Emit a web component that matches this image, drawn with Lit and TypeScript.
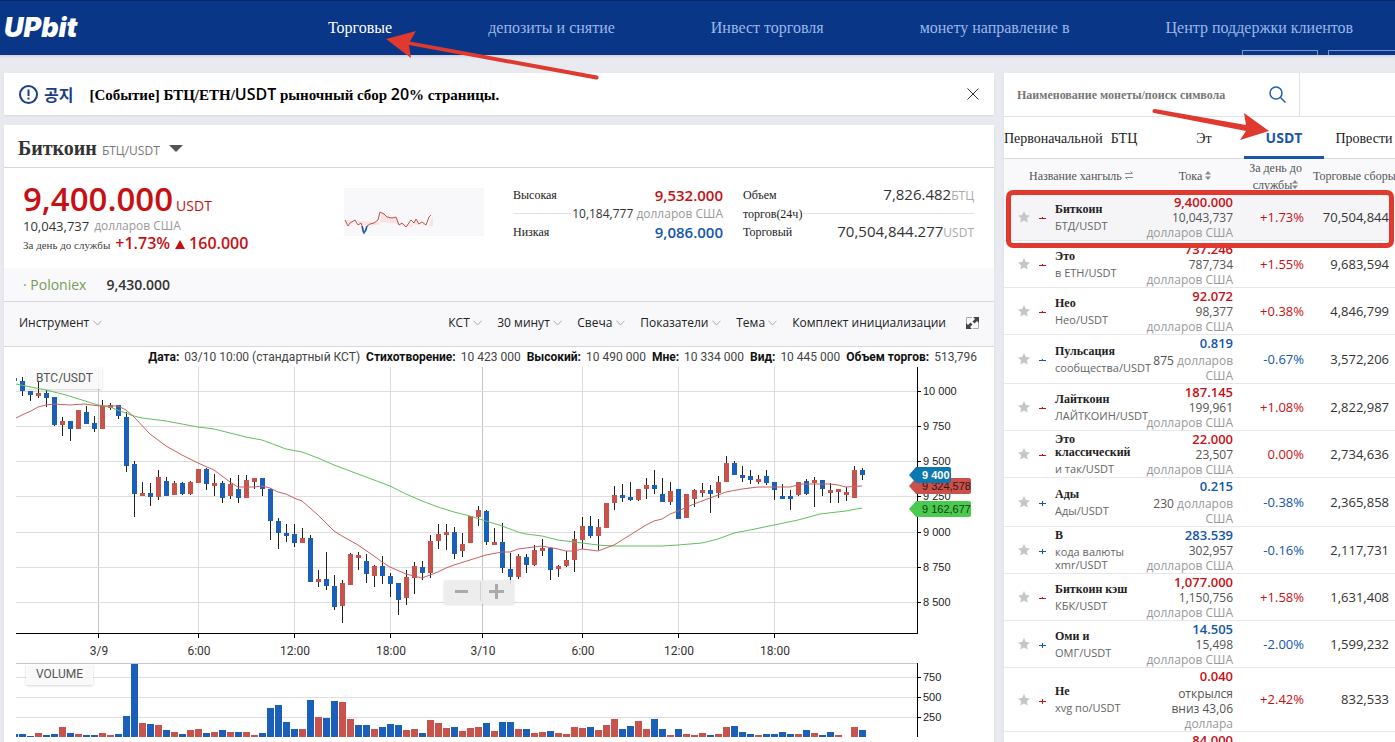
import { LitElement, html, svg, css, nothing } from "lit";
import { customElement, property } from "lit/decorators.js";

type Tone = "up" | "down";
type Coin = {
  name: string; code: string; tone: Tone; price: string;
  krw: string; unit: string; wrap?: boolean; change: string; volume: string; plus?: boolean;
};

const COINS: Coin[] = [
  { name: "Биткоин", code: "БТД/USDT", tone: "up", price: "9,400.000", krw: "10,043,737", unit: "долларов США", change: "+1.73%", volume: "70,504,844" },
  { name: "Это", code: "в ETH/USDT", tone: "up", price: "737.246", krw: "787,734", unit: "долларов США", change: "+1.55%", volume: "9,683,594" },
  { name: "Нео", code: "Нео/USDT", tone: "up", price: "92.072", krw: "98,377", unit: "долларов США", change: "+0.38%", volume: "4,846,799" },
  { name: "Пульсация", code: "сообщества/USDT", tone: "down", price: "0.819", krw: "875", unit: "долларов США", wrap: true, change: "-0.67%", volume: "3,572,206" },
  { name: "Лайткоин", code: "ЛАЙТКОИН/USDT", tone: "up", price: "187.145", krw: "199,961", unit: "долларов США", change: "+1.08%", volume: "2,822,987" },
  { name: "Это классический", code: "и так/USDT", tone: "up", price: "22.000", krw: "23,507", unit: "долларов США", change: "0.00%", volume: "2,734,636" },
  { name: "Ады", code: "Ады/USDT", tone: "down", price: "0.215", krw: "230", unit: "долларов США", wrap: true, change: "-0.38%", volume: "2,365,858", plus: true },
  { name: "В", code: "кода валюты xmr/USDT", tone: "down", price: "283.539", krw: "302,957", unit: "долларов США", change: "-0.16%", volume: "2,117,731", plus: true },
  { name: "Биткоин кэш", code: "КБК/USDT", tone: "up", price: "1,077.000", krw: "1,150,756", unit: "долларов США", change: "+1.58%", volume: "1,631,408" },
  { name: "Оми и", code: "ОМГ/USDT", tone: "down", price: "14.505", krw: "15,498", unit: "долларов США", change: "-2.00%", volume: "1,599,232", plus: true },
  { name: "Не", code: "xvg по/USDT", tone: "up", price: "0.040", krw: "открылся вниз 43,06", unit: "доллара", wrap: true, change: "+2.42%", volume: "832,533", plus: true },
  { name: "", code: "", tone: "up", price: "84.000", krw: "", unit: "", change: "", volume: "" },
];

// Each candle: [tone, high, body top, body bottom, low, volume bar height]
type Candle = [0 | 1, number, number, number, number, number];
const CANDLES: Candle[] = [
  [0,377,381,391,396,3],[0,391,391,395,401,1],[1,382,393,396,398,4],[0,390,393,398,407,2],[0,397,397,425,426,3],
  [1,417,421,425,436,10],[0,421,421,429,441,4],[1,410,410,429,429,3],[0,406,412,424,424,2],[0,416,423,429,432,2],
  [1,400,406,429,429,4],[1,403,405,408,410,2],[0,405,405,416,419,3],[0,412,417,466,472,21],[0,461,464,494,517,73],
  [1,482,493,496,496,14],[0,483,493,497,506,13],[1,470,477,497,500,12],[0,477,481,496,496,7],[1,481,483,495,495,5],
  [0,482,483,494,495,3],[1,481,482,494,495,7],[1,469,469,483,483,8],[0,468,469,484,490,4],[1,474,483,486,496,5],
  [0,481,483,498,503,7],[1,478,484,496,499,5],[0,475,489,498,503,5],[1,475,480,498,498,5],[1,478,478,482,489,2],
  [0,478,478,489,496,4],[0,488,489,521,540,29],[0,518,521,533,549,32],[0,524,533,536,542,15],[0,524,534,543,547,8],
  [1,528,538,543,543,8],[0,535,538,582,582,37],[1,570,579,582,587,20],[0,552,579,586,590,19],[0,575,586,607,610,36],
  [1,580,583,606,623,35],[1,553,554,585,585,18],[1,552,555,558,570,12],[0,554,561,574,583,12],[1,565,566,576,587,8],
  [0,556,566,576,584,10],[0,573,576,584,597,13],[0,583,583,600,615,12],[1,570,577,598,605,7],[1,562,566,578,594,8],
  [0,561,567,573,580,4],[1,535,541,573,578,17],[1,524,534,541,549,14],[1,524,532,535,550,9],[0,527,532,554,559,10],
  [1,533,544,551,557,6],[1,516,516,543,543,9],[1,506,510,517,526,10],[0,510,511,542,545,14],[1,528,542,545,545,6],
  [0,523,542,568,573,15],[0,553,569,577,584,15],[1,554,556,577,579,8],[0,554,557,565,573,8],[1,545,550,565,566,4],
  [1,539,548,551,556,5],[0,548,548,570,580,6],[1,565,566,569,577,4],[1,551,560,566,567,3],[1,531,539,560,572,10],
  [1,517,526,540,549,9],[0,516,526,536,538,10],[1,519,527,536,550,7],[1,503,503,528,528,12],[1,486,495,503,510,18],
  [0,484,495,498,502,8],[0,482,497,500,501,11],[1,489,489,500,501,16],[1,478,485,489,499,8],[0,470,485,489,494,18],
  [0,478,494,502,502,8],[1,482,491,502,505,2],[0,489,489,519,519,8],[1,494,494,518,518,3],[1,489,490,499,507,2],
  [1,483,490,493,497,4],[0,485,490,494,513,2],[1,476,482,493,498,3],[1,456,463,482,482,10],[0,461,463,475,475,11],
  [0,466,475,478,482,5],[0,470,476,480,484,3],[1,475,479,482,484,2],[0,470,476,483,485,3],[0,482,482,490,500,3],
  [0,484,496,499,499,5],[0,490,496,499,510,3],[1,482,482,495,496,3],[0,479,481,494,495,7],[1,477,480,483,507,4],
  [0,480,480,489,496,2],[1,483,490,493,503,5],[1,489,489,492,503,2],[1,487,492,495,501,0],[1,466,470,498,498,10],
  [0,468,470,475,480,7],
];
// Slots whose volume bar is blue although the candle closed up
const BLUE_VOLUME = new Set([42, 101]);

const FAST_AVERAGE = "16,418 22,415 31,411 38,407 46,405 54,404 70,405 84,404 100,406 118,406 126,410 134,417 150,434 166,446 182,455 198,463 214,470 230,482 238,487 254,487 262,486 270,488 278,492 286,494 294,498 302,501 318,515 334,531 342,536 358,545 374,556 382,562 390,567 406,574 422,578 430,575 438,572 446,568 454,565 470,560 486,555 502,552 510,552 518,549 542,546 558,549 566,551 574,551 582,549 598,551 606,548 614,545 630,535 646,525 654,521 662,519 670,514 678,511 694,504 710,498 726,492 742,489 758,487 790,487 802,484 830,484 838,485 846,487 862,486";
const SLOW_AVERAGE = "16,384 46,390 66,395 82,400 98,405 110,407 120,411 134,416 142,418 166,421 198,427 214,429 230,433 246,437 262,440 270,443 286,449 302,452 318,458 334,465 350,471 366,477 382,483 390,486 406,494 422,501 438,507 454,512 470,516 486,521 502,526 518,532 526,534 542,536 558,540 582,543 598,545 614,546 662,546 678,545 702,543 718,539 734,533 750,530 774,525 798,520 820,514 846,511 862,508";

const PRICES: [number, string][] = [[391,"10 000"],[426,"9 750"],[461,"9 500"],[496,"9 250"],[532,"9 000"],[567,"8 750"],[602,"8 500"]];
const VOLUMES: [number, string][] = [[677,"750"],[697,"500"],[717,"250"]];
const TIMES: [number, string][] = [[98,"3/9"],[198,"6:00"],[294,"12:00"],[390,"18:00"],[482,"3/10"],[582,"6:00"],[678,"12:00"],[774,"18:00"]];
const TAGS: { y: number; label: string; kind: string; right: number }[] = [
  { y: 486, label: "9 324,578", kind: "fast", right: 971 },
  { y: 475, label: "9 400", kind: "last", right: 951 },
  { y: 509, label: "9 162,677", kind: "slow", right: 971 },
];

@customElement("price-chart")
class PriceChart extends LitElement {
  static styles = css`
    :host { display: block; }
    .chart { display: block; width: 100%; height: auto; }
    .grid { stroke: #dedede; }
    .day { stroke: #c4c4c4; }
    .axis { stroke: #000; }
    .border { stroke: #c8c8c8; }
    .wick { stroke: #222; }
    .up { fill: #c8524c; }
    .down { fill: #1a5fba; }
    .line { fill: none; stroke-width: 1; }
    .line.fast { stroke: #c9615d; }
    .line.slow { stroke: #63bf62; }
    .price { font: 11px "Liberation Sans", Arial, sans-serif; fill: #222; }
    .tag-fast { fill: #c9504b; } .tag-last { fill: #0d78b0; } .tag-slow { fill: #4bca50; }
    .ink-fast { fill: #3a1513; } .ink-last { fill: #fff; font-weight: 700; } .ink-slow { fill: #123e14; }
    .time { font: 12px Roboto, sans-serif; fill: #333; text-anchor: middle; }
    .legend { font: 12px Roboto, sans-serif; fill: #555; }
    .plate { fill: #fff; fill-opacity: 0.85; filter: drop-shadow(0 1px 1px #0003); }
    .zoom { fill: #eee; fill-opacity: 0.88; filter: drop-shadow(0 1px 1px #0002); }
    .sign { fill: #aaa; }
  `;

  render() {
    const x = (i: number) => 22 + i * 8;
    return html`
      <svg class="chart" viewBox="4 367 990 375" role="img" aria-label="BTC/USDT">
        <g shape-rendering="crispEdges">
          ${TIMES.map(([t, label]) => svg`<path class=${label.includes("/") ? "day" : "grid"} d="M${t + 0.5} 367V633" />`)}
          ${PRICES.map(([y]) => svg`<path class="grid" d="M16 ${y + 0.5}H917" />`)}
          ${VOLUMES.map(([y]) => svg`<path class="grid" d="M16 ${y + 0.5}H917" />`)}
          <path class="border" d="M16 663.5H917" />
        </g>
        <rect class="plate" x="26" y="664" width="67" height="21" />
        <text class="legend" x="36" y="678">VOLUME</text>
        <rect class="plate" x="26" y="367" width="76" height="22" />
        <text class="legend" x="36" y="382">BTC/USDT</text>
        <g shape-rendering="crispEdges">
          <rect class="down" x="16" y="378" width="1" height="3" />
          <rect class="down" x="16" y="734" width="2" height="3" />
          ${CANDLES.map(([up, hi, top, bottom, lo, volume], i) => svg`
            <path class="wick" d="M${x(i) + 0.5} ${hi}V${lo}" />
            <rect class=${up ? "up" : "down"} x=${x(i) - 2} y=${top} width="5" height=${bottom - top} />
            <rect class=${up && !BLUE_VOLUME.has(i) ? "up" : "down"} x=${x(i) - 3} y=${737 - volume} width="7" height=${volume} />`)}
          <path class="axis" d="M16 633.5H917.5V367M917.5 663V737" fill="none" />
          ${TIMES.map(([t]) => svg`<path class="axis" d="M${t + 0.5} 634v4" />`)}
          ${[...PRICES, ...VOLUMES].map(([y]) => svg`<path class="axis" d="M918 ${y + 0.5}h3" />`)}
        </g>
        <polyline class="line slow" points=${SLOW_AVERAGE} />
        <polyline class="line fast" points=${FAST_AVERAGE} />
        ${[...PRICES, ...VOLUMES].map(([y, label]) => svg`<text class="price" x="923" y=${y + 4}>${label}</text>`)}
        ${TIMES.map(([t, label]) => svg`<text class="time" x=${t + 1} y="655">${label}</text>`)}
        ${TAGS.map(({ y, label, kind, right }) => svg`
          <path class="tag-${kind}" d="M909 ${y}L916 ${y - 8}H${right - 2}Q${right} ${y - 8} ${right} ${y - 6}V${y + 6}Q${right} ${y + 8} ${right - 2} ${y + 8}H916Z" />
          <text class="price ink-${kind}" x="922" y=${y + 4}>${label}</text>`)}
        <rect class="zoom" x="444" y="580" width="70" height="24" rx="1" />
        <rect class="sign" x="455" y="590" width="13" height="3" />
        <rect x="480" y="582" width="1" height="19" fill="#d4d4d4" />
        <path class="sign" d="M489 590h6v-6h3v6h6v3h-6v6h-3v-6h-6z" />
      </svg>`;
  }
}

@customElement("menu-select")
class MenuSelect extends LitElement {
  @property() label = "";
  static styles = css`
    :host { display: block; }
    .wrap { display: flex; align-items: center; gap: 3px; }
    .select {
      appearance: none; border: 0; padding: 0; margin: 0; background: none;
      font: 12px/18px "Open Sans", "Noto Sans", sans-serif; color: #222;
    }
    .chevron { display: block; width: 9px; height: 6px; fill: none; stroke: #aaa; }
  `;
  render() {
    return html`<label class="wrap">
      <select class="select" aria-label=${this.label}><option>${this.label}</option></select>
      <svg class="chevron" viewBox="0 0 9 6"><path d="M.5 .7 4.5 5 8.5 .7" /></svg>
    </label>`;
  }
}

const arrowDown = svg`<path d="M0 0h14L7 7z" />`;

@customElement("app-root")
class AppRoot extends LitElement {
  static styles = css`
    :host {
      --sans: "Open Sans", "Noto Sans", sans-serif;
      --serif: "Liberation Serif", "Times New Roman", serif;
      --red: #c80f14; --blue: #1357a8; --mark: #e0392f;
      display: flex; flex-direction: column; height: 100vh; overflow: hidden;
      background: #e9eaf0; color: #333;
      font: 12px/16px var(--sans);
    }
    * { box-sizing: border-box; }
    h1, h2, p, dl, dd, ul { margin: 0; padding: 0; }
    button { border: 0; padding: 0; margin: 0; background: none; font: inherit; color: inherit; }
    a { color: inherit; text-decoration: none; }
    svg { display: block; }
    .up { color: var(--red); }
    .down { color: var(--blue); }

    .header {
      position: relative; z-index: 1; flex: none; height: 55px; overflow: visible;
      display: flex; align-items: center;
      background: #093687; border-top: 1px solid #062765;
      box-shadow: 0 1px 3px #0002;
    }
    .logo { width: 328px; padding-left: 4px; font: italic 900 27px/30px Inter, sans-serif; color: #fff; }
    .nav { display: flex; gap: 96px; white-space: nowrap; font: 16px/20px var(--serif); color: #9db8e8; }
    .nav a { position: relative; }
    .nav .current { color: #fff; }
    .boxes { position: absolute; left: 1242px; right: 0; bottom: 0; height: 5px; overflow: hidden; display: flex; gap: 10px; }
    .box { flex: none; width: 76px; height: 20px; border: 1px solid #7898cf; }
    .arrow { position: absolute; overflow: visible; fill: var(--mark); stroke: none; pointer-events: none; z-index: 2; }
    .arrow-nav { left: 58px; top: 13px; width: 212px; height: 46px; }
    .arrow-tab { left: -93px; top: -11px; width: 120px; height: 40px; }

    .page {
      flex: 1; min-height: 0; display: grid; grid-template-columns: minmax(0, 1fr) 391px;
      gap: 10px; padding: 18px 0 0 4px;
    }
    .main { min-width: 0; display: flex; flex-direction: column; gap: 10px; }
    .card { background: #fff; box-shadow: 0 1px 2px #0001; }

    .notice { flex: none; height: 42px; padding: 0 15px; display: flex; align-items: center; }
    .notice-icon { width: 19px; height: 19px; margin-right: 6px; }
    .notice-tag { font: 700 16px/20px "Noto Sans CJK KR", sans-serif; color: #1a3f85; margin-right: 16px; }
    .notice-text { flex: 1; font: 700 15px/20px var(--serif); color: #000; }
    .sans { font: 600 16px/20px var(--sans); }
    .close { width: 12px; height: 12px; }

    .market { flex: 1; min-height: 0; }
    .title { height: 43px; padding: 4px 14px 0; display: flex; align-items: center; border-bottom: 1px solid #d8d8dc; }
    .name { font: 700 20px/24px var(--serif); margin-right: 5px; }
    .pair { font-size: 12px; line-height: 16px; color: #777; padding-top: 6px; }
    .more { margin-left: 9px; fill: #555; }

    .ticker { height: 100px; padding: 13px 20px 0 19px; display: flex; }
    .quote { width: 321px; }
    .last { display: flex; align-items: baseline; gap: 3px; height: 36px; font: 600 33px/36px var(--sans); }
    .last-unit { font: 14px/16px var(--sans); }
    .sub { height: 16px; font-size: 13px; line-height: 18px; display: flex; gap: 5px; }
    .sub .muted { font-size: 12px; }
    .muted { color: #999; }
    .delta { display: flex; align-items: baseline; gap: 5px; font-weight: 600; font-size: 16px; line-height: 20px; white-space: nowrap; }
    .delta-label { font: 11px/16px var(--serif); color: #444; }
    .triangle { display: inline-block; width: 10px; height: 9px; margin-right: 4px; fill: currentColor; }
    .spark { width: 140px; height: 48px; margin-top: 7px; background: #f8f8fb; }
    .stats { display: flex; flex: 1; gap: 20px; margin-left: 29px; padding-top: 5px; }
    .stat { width: 210px; }
    .stat-wide { flex: 1; }
    .line { display: flex; align-items: center; justify-content: space-between; height: 18px; }
    .line dt, .mid-label { font: 12px/18px var(--serif); color: #222; }
    .line dd { font-size: 15px; line-height: 18px; color: #333; }
    .line dd.bold { font-weight: 600; }
    .line dd.up { color: var(--red); }
    .line dd.down { color: var(--blue); }
    .unit { font-size: 12px; color: #aaa; }
    .mid { display: flex; align-items: center; gap: 1px; height: 19px; font-size: 12px; white-space: nowrap; }
    .rule { flex: 1; height: 1px; background: #e2e2e6; }

    .rival { height: 34px; padding: 0 19px; display: flex; align-items: center; gap: 20px; font-size: 14px; background: #f9f9fb; border-bottom: 1px solid #d8d8dc; }
    .rival-name { color: #7a9a55; }
    .rival-price { font-weight: 600; }
    .toolbar { height: 45px; padding: 0 15px 2px; display: flex; align-items: center; gap: 15px; background: #f8f8fa; border-bottom: 1px solid #d8d8dc; color: #222; white-space: nowrap; }
    .grow { flex: 1; }
    .expand { margin-left: 5px; }
    .ohlc { height: 20px; padding: 1px 17px 0; display: flex; justify-content: flex-end; align-items: center; gap: 6px; font: 12px/19px Roboto, sans-serif; color: #444; white-space: nowrap; }
    .ohlc b { color: #111; font-weight: 700; margin-right: 5px; }

    .side { min-width: 0; overflow: hidden; }
    .search { display: flex; align-items: center; height: 43px; width: 296px; padding: 0 13px; border-right: 1px solid #e2e2e6; }
    .search input { flex: 1; min-width: 0; border: 0; padding: 0; outline: 0; background: none; font: 700 12px/16px var(--serif); color: #666; }
    .search input::placeholder { color: #777; opacity: 1; }
    .search svg { fill: none; stroke: #1c61b5; stroke-width: 1.5; }
    .tabs { display: grid; grid-template-columns: repeat(5, 80px); height: 43px; border-top: 1px solid #e2e2e6; border-bottom: 1px solid #d8d8dc; font: 14px/20px var(--serif); color: #222; white-space: nowrap; }
    .tab { position: relative; display: block; padding: 12px 0 8px; text-align: center; height: 43px; }
    .tab.active { font: 700 14px/20px var(--sans); color: #1b56a6; border-bottom: 3px solid #1b56a6; padding: 11px 0 0; height: 42px; }

    .coins { width: 100%; table-layout: fixed; border-collapse: collapse; }
    .c-star { width: 30px; } .c-icon { width: 16px; } .c-name { width: 92px; } .c-price { width: 91px; } .c-change { width: 71px; }
    .coins th { height: 35px; padding: 0; background: #f9f9fb; font: 12px/17px var(--serif); color: #555; vertical-align: middle; text-align: center; }
    .coins th.h-name { text-align: left; padding-left: 25px; }
    .coins th.h-price { padding-left: 15px; }
    .coins th.h-last { text-align: left; padding-left: 9px; white-space: nowrap; }
    .coins th.h-change { padding-left: 14px; }
    .coins svg { display: inline-block; }
    .coins td { padding: 0; border-bottom: 1px solid #e8e8ec; vertical-align: middle; text-align: right; font-size: 13px; line-height: 15px; white-space: nowrap; }
    .coins td.star { padding-left: 14px; text-align: left; }
    .star button, .star svg { display: block; }
    .star svg { fill: #c6c6c9; }
    .coins td.candle { text-align: center; }
    .candle svg { fill: currentColor; vertical-align: middle; }
    .coins td.coin { text-align: left; padding-left: 5px; font-size: 11px; line-height: 13px; color: #666; }
    .coin-name { display: block; font: 700 12px/13px var(--serif); color: #222; margin-bottom: 3px; max-width: 80px; white-space: normal; }
    .coin-code { display: block; }
    .coin-code.two { white-space: normal; max-width: 80px; }
    .price { display: block; font-weight: 600; line-height: 16px; }
    .krw { display: block; font-size: 12px; white-space: normal; color: #555; }
    .krw .muted { display: block; white-space: nowrap; }
    .krw.wrap { margin-top: 2px; padding-left: 8px; }
    .krw.wrap .muted { display: inline; white-space: normal; }
    .coins td.vol { padding-right: 6px; color: #333; }
    .marked { position: relative; }
    .marked td { background: #f5f5f8; }
    .frame { position: absolute; z-index: 1; inset: -4px 1px -7px 2px; border: 5px solid var(--mark); border-radius: 7px; pointer-events: none; }
  `;

  private row(c: Coin, i: number) {
    return html`<tr class=${i === 0 ? "marked" : ""}>
      <td class="star">${c.name ? html`<button aria-label="${c.name}"><svg width="12" height="12" viewBox="0 0 12 12"><path d="M6 0l1.8 3.900 4.200.500-3.100 2.900.800 4.200L6 9.400l-3.700 2.100.800-4.200L0 4.400l4.200-.500z" /></svg></button>` : nothing}</td>
      <td class="candle ${c.tone}">${c.name ? html`<svg width="7" height="8" viewBox="0 0 7 8" shape-rendering="crispEdges"><path d=${c.plus ? "M0 4h3V2h1v2h3v1H4v2H3V5H0z" : "M0 4h3V3h1v1h3v1H0z"} /></svg>` : nothing}</td>
      <td class="coin"><span class="coin-name">${c.name}</span><span class="coin-code ${c.code.length > 16 ? "two" : ""}">${c.code}</span></td>
      <td><span class="price ${c.tone}">${c.price}</span><span class="krw ${c.wrap ? "wrap" : ""}">${c.krw} <span class="muted">${c.unit}</span></span></td>
      <td class=${c.tone}>${c.change}</td>
      <td class="vol">${c.volume}${i === 0 ? html`<span class="frame"></span>` : nothing}</td>
    </tr>`;
  }

  private sort() {
    return svg`<svg width="6" height="9" viewBox="0 0 6 9" fill="#888"><path d="M3 0l3 3.500H0zM3 9l3-3.500H0z" /></svg>`;
  }

  render() {
    const ohlc = [["Дата:", "03/10 10:00 (стандартный КСТ)"], ["Стихотворение:", "10 423 000"], ["Высокий:", "10 490 000"], ["Мне:", "10 334 000"], ["Вид:", "10 445 000"], ["Объем торгов:", "513,796"]];
    return html`
      <header class="header">
        <a class="logo" href="#">UPbit</a>
        <nav class="nav">
          <a class="current" href="#">Торговые
            <svg class="arrow arrow-nav" viewBox="0 0 212 46"><path d="M0 8 30 0l-6 10.500 187 34a2 2 0 0 1-1 4L23 14l2 13z" /></svg>
          </a>
          <a href="#">депозиты и снятие</a>
          <a href="#">Инвест торговля</a>
          <a href="#">монету направление в</a>
          <a href="#">Центр поддержки клиентов</a>
        </nav>
        <div class="boxes"><span class="box"></span><span class="box"></span></div>
      </header>
      <div class="page">
        <main class="main">
          <section class="card notice">
            <svg class="notice-icon" viewBox="0 0 19 19" fill="none" stroke="#1a3f85" stroke-width="2"><circle cx="9.500" cy="9.500" r="8.500" /><path d="M9.500 4.500v6.500M9.500 12.500v2" /></svg>
            <span class="notice-tag" lang="ko">공지</span>
            <p class="notice-text">[Событие] БТЦ/ETH/<span class="sans">USDT</span> рыночный сбор <span class="sans">20</span>% страницы.</p>
            <button class="close" aria-label="×"><svg width="12" height="12" viewBox="0 0 12 12" stroke="#333" fill="none"><path d="M.5 .5l11 11M11.500 .5l-11 11" /></svg></button>
          </section>
          <section class="card market">
            <div class="title">
              <h1 class="name">Биткоин</h1><span class="pair">БТЦ/USDT</span>
              <button class="more" aria-label="БТЦ/USDT"><svg width="14" height="7" viewBox="0 0 14 7">${arrowDown}</svg></button>
            </div>
            <div class="ticker">
              <div class="quote">
                <p class="last up">9,400.000<span class="last-unit">USDT</span></p>
                <p class="sub"><span>10,043,737</span><span class="muted">долларов США</span></p>
                <p class="delta up"><span class="delta-label">За день до службы</span><span>+1.73%</span><span><svg class="triangle" viewBox="0 0 10 9"><path d="M5 0l5 9H0z" /></svg>160.000</span></p>
              </div>
              <svg class="spark" viewBox="0 0 140 48">
                <path fill="#fbe3e3" d="M1 32l3 5 6-5 3 1 3 4 2-1v1h17l3-13 4 3 5 3 6-1 3 8 12 2 4-7 4 5 5-1 4 3 3-10h1v9z" />
                <path fill="none" stroke="#c8524c" d="M1 32l3 6 2-3 5-3 3 5 3-2 2 5 1 5 3-7 3-2 4-1 4-3 2-8 4 2 3 3 5 1 4-1 3 8 3-2 4 4 5-7 3 3 2-4 3 5 3-2 4 3 3-8 2-2" />
                <path fill="none" stroke="#1a5fba" stroke-width="1.500" d="M18 38l1 5 1 2 2-3 1-4" />
              </svg>
              <div class="stats">
                <dl class="stat">
                  <div class="line"><dt>Высокая</dt><dd class="bold up">9,532.000</dd></div>
                  <div class="mid"><span class="rule"></span><span>10,184,777 <span class="muted">долларов США</span></span></div>
                  <div class="line"><dt>Низкая</dt><dd class="bold down">9,086.000</dd></div>
                </dl>
                <dl class="stat-wide">
                  <div class="line"><dt>Объем</dt><dd>7,826.482<span class="unit">БТЦ</span></dd></div>
                  <div class="mid"><span class="mid-label">торгов(24ч)</span><span class="rule"></span></div>
                  <div class="line"><dt>Торговый</dt><dd>70,504,844.277<span class="unit">USDT</span></dd></div>
                </dl>
              </div>
            </div>
            <div class="rival"><span class="rival-name">· Poloniex</span><span class="rival-price">9,430.000</span></div>
            <div class="toolbar">
              <menu-select label="Инструмент"></menu-select><span class="grow"></span>
              <menu-select label="КСТ"></menu-select>
              <menu-select label="30 минут"></menu-select>
              <menu-select label="Свеча"></menu-select>
              <menu-select label="Показатели"></menu-select>
              <menu-select label="Тема"></menu-select>
              <button>Комплект инициализации</button>
              <button class="expand" aria-label="⤢"><svg width="13" height="12" viewBox="0 0 13 12"><path d="M.5 7V.5H6M12.500 5v6.500H7" fill="none" stroke="#aaa" /><path d="M7 0h6v6l-2-2-2.500 2.500-2-2L9 2zM6 12H0V6l2 2 2.500-2.500 2 2L4 10z" fill="#444" /></svg></button>
            </div>
            <div class="ohlc">${ohlc.map(([k, v]) => html`<span><b>${k}</b>${v}</span>`)}</div>
            <price-chart></price-chart>
          </section>
        </main>
        <aside class="card side">
          <label class="search">
            <input type="text" aria-label="Поиск" placeholder="Наименование монеты/поиск символа" />
            <svg width="17" height="17" viewBox="0 0 17 17"><circle cx="7" cy="7" r="6" /><path d="M11.500 11.500l5 5" /></svg>
          </label>
          <nav class="tabs">
            <a class="tab" href="#">Первоначальной</a>
            <a class="tab" href="#">БТЦ</a>
            <a class="tab" href="#">Эт</a>
            <a class="tab active" href="#">USDT<svg class="arrow arrow-tab" viewBox="0 0 120 40"><path d="M118 25 89 34l6-9L3 7a2 2 0 0 1 1-4l91 16-2-12z" /></svg></a>
            <a class="tab" href="#">Провести</a>
          </nav>
          <table class="coins">
            <colgroup><col class="c-star" /><col class="c-icon" /><col class="c-name" /><col class="c-price" /><col class="c-change" /><col /></colgroup>
            <thead><tr>
              <th class="h-name" colspan="3">Название хангыль <svg width="8" height="9" viewBox="0 0 8 9" fill="none" stroke="#888"><path d="M0 2.500h7.500L5.500 .5M8 6.500H.5l2 2" /></svg></th>
              <th class="h-price">Тока ${this.sort()}</th>
              <th class="h-change">За день до службы${this.sort()}</th>
              <th class="h-last">Торговые сборы</th>
            </tr></thead>
            <tbody>${COINS.map((c, i) => this.row(c, i))}</tbody>
          </table>
        </aside>
      </div>`;
  }
}
